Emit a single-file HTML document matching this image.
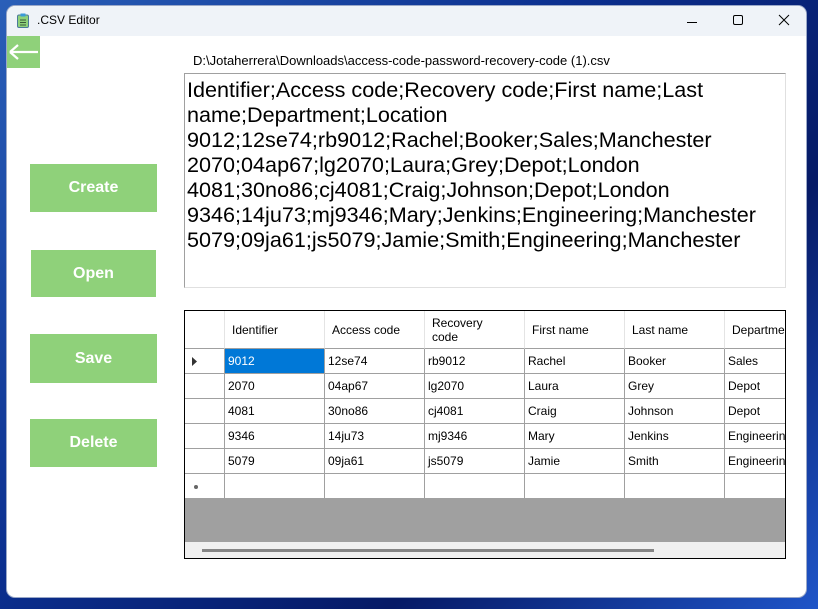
<!DOCTYPE html>
<html><head><meta charset="utf-8"><style>
*{margin:0;padding:0;box-sizing:border-box}
body{width:818px;height:609px;overflow:hidden;position:relative;font-family:"Liberation Sans",sans-serif;
background:linear-gradient(135deg,#2a5fb8 0%,#0b2f8f 40%,#061a66 70%,#1f55c8 100%);}
.win{position:absolute;left:7px;top:6px;width:799px;height:591px;background:#fff;border-radius:8px;overflow:hidden;box-shadow:0 0 0 1px #9aa8c8}
.title{position:absolute;left:0;top:0;width:100%;height:30px;background:#eff3f8}
.title .t{position:absolute;left:30px;top:7px;font-size:12px;color:#000}
.a{position:absolute}
.btn{position:absolute;background:#8fd17a;color:#fff;font-weight:bold;font-size:16px;text-align:center}
.tb{position:absolute;left:177px;top:67px;width:602px;height:215px;border:1px solid #a0a0a0;border-right-color:#e0e0e0;border-bottom-color:#e0e0e0;font-size:21.6px;line-height:25px;padding:3px 0 0 2px;color:#000;white-space:nowrap;overflow:hidden}
.grid{position:absolute;left:177px;top:304px;width:602px;height:249px;border:1px solid #000;background:#a0a0a0;overflow:hidden}
.c{position:absolute;font-size:12px;color:#000;background:#fff;border-right:1px solid #a0a0a0;border-bottom:1px solid #a0a0a0;padding-left:3px;line-height:24px;white-space:nowrap;overflow:hidden}
.h{border-right:1px solid #e4e4e4;border-bottom:1px solid #a0a0a0;padding-left:7px}
</style></head><body>
<div class="win">
<div class="title">
<svg class="a" style="left:10px;top:7px" width="12" height="15" viewBox="0 0 12 15"><rect x="0.5" y="2" width="11" height="12.5" rx="1.5" fill="#8fd17a" stroke="#4a7a9a"/><rect x="3.5" y="0.5" width="5" height="3" fill="#3a9ad8"/><path d="M3 7h6M3 9.5h6M3 12h6" stroke="#3a5a3a"/></svg>
<div class="t">.CSV Editor</div>
<svg class="a" style="left:680px;top:11px" width="10" height="10"><path d="M0 5.5h10" stroke="#000"/></svg>
<svg class="a" style="left:725px;top:8px" width="12" height="12"><rect x="1.5" y="1.5" width="9" height="9" rx="1.5" fill="none" stroke="#000"/></svg>
<svg class="a" style="left:771px;top:8px" width="12" height="12"><path d="M1 1l10 10M11 1L1 11" stroke="#000"/></svg>
</div>
<div class="a" style="left:0;top:30px;width:33px;height:32px;background:#8fd17a"></div>
<svg class="a" style="left:1px;top:36px" width="32" height="20"><path d="M2 10h28M2 10l8-7M2 10l8 7" stroke="#fff" stroke-width="2.2" fill="none"/></svg>
<div class="a" style="left:186px;top:47px;font-size:13px;color:#000">D:\Jotaherrera\Downloads\access-code-password-recovery-code (1).csv</div>
<div class="tb">Identifier;Access code;Recovery code;First name;Last<br>name;Department;Location<br>9012;12se74;rb9012;Rachel;Booker;Sales;Manchester<br>2070;04ap67;lg2070;Laura;Grey;Depot;London<br>4081;30no86;cj4081;Craig;Johnson;Depot;London<br>9346;14ju73;mj9346;Mary;Jenkins;Engineering;Manchester<br>5079;09ja61;js5079;Jamie;Smith;Engineering;Manchester</div>
<div class="btn" style="left:23px;top:158px;width:127px;height:48px;line-height:48px">Create</div>
<div class="btn" style="left:24px;top:244px;width:125px;height:47px;line-height:47px">Open</div>
<div class="btn" style="left:23px;top:328px;width:127px;height:49px;line-height:49px">Save</div>
<div class="btn" style="left:23px;top:413px;width:127px;height:48px;line-height:48px">Delete</div>
<div class="grid">
<div class="c h" style="left:0;top:0;width:40px;height:38px"></div>
<div class="c h" style="left:40px;top:0;width:100px;height:38px;line-height:38px">Identifier</div>
<div class="c h" style="left:140px;top:0;width:100px;height:38px;line-height:38px">Access code</div>
<div class="c h" style="left:240px;top:0;width:100px;height:38px;line-height:14px;padding-top:5px">Recovery<br>code</div>
<div class="c h" style="left:340px;top:0;width:100px;height:38px;line-height:38px">First name</div>
<div class="c h" style="left:440px;top:0;width:100px;height:38px;line-height:38px">Last name</div>
<div class="c h" style="left:540px;top:0;width:100px;height:38px;line-height:38px">Department</div>

<div class="c" style="left:0;top:38px;width:40px;height:25px"><svg style="position:absolute;left:7px;top:8px" width="6" height="9"><path d="M0 0l5 4.5L0 9z" fill="#333"/></svg></div>
<div class="c" style="left:40px;top:38px;width:100px;height:25px;background:#0078d7;color:#fff">9012</div>
<div class="c" style="left:140px;top:38px;width:100px;height:25px">12se74</div>
<div class="c" style="left:240px;top:38px;width:100px;height:25px">rb9012</div>
<div class="c" style="left:340px;top:38px;width:100px;height:25px">Rachel</div>
<div class="c" style="left:440px;top:38px;width:100px;height:25px">Booker</div>
<div class="c" style="left:540px;top:38px;width:100px;height:25px">Sales</div>

<div class="c" style="left:0;top:63px;width:40px;height:25px"></div>
<div class="c" style="left:40px;top:63px;width:100px;height:25px">2070</div>
<div class="c" style="left:140px;top:63px;width:100px;height:25px">04ap67</div>
<div class="c" style="left:240px;top:63px;width:100px;height:25px">lg2070</div>
<div class="c" style="left:340px;top:63px;width:100px;height:25px">Laura</div>
<div class="c" style="left:440px;top:63px;width:100px;height:25px">Grey</div>
<div class="c" style="left:540px;top:63px;width:100px;height:25px">Depot</div>

<div class="c" style="left:0;top:88px;width:40px;height:25px"></div>
<div class="c" style="left:40px;top:88px;width:100px;height:25px">4081</div>
<div class="c" style="left:140px;top:88px;width:100px;height:25px">30no86</div>
<div class="c" style="left:240px;top:88px;width:100px;height:25px">cj4081</div>
<div class="c" style="left:340px;top:88px;width:100px;height:25px">Craig</div>
<div class="c" style="left:440px;top:88px;width:100px;height:25px">Johnson</div>
<div class="c" style="left:540px;top:88px;width:100px;height:25px">Depot</div>

<div class="c" style="left:0;top:113px;width:40px;height:25px"></div>
<div class="c" style="left:40px;top:113px;width:100px;height:25px">9346</div>
<div class="c" style="left:140px;top:113px;width:100px;height:25px">14ju73</div>
<div class="c" style="left:240px;top:113px;width:100px;height:25px">mj9346</div>
<div class="c" style="left:340px;top:113px;width:100px;height:25px">Mary</div>
<div class="c" style="left:440px;top:113px;width:100px;height:25px">Jenkins</div>
<div class="c" style="left:540px;top:113px;width:100px;height:25px">Engineering</div>

<div class="c" style="left:0;top:138px;width:40px;height:25px"></div>
<div class="c" style="left:40px;top:138px;width:100px;height:25px">5079</div>
<div class="c" style="left:140px;top:138px;width:100px;height:25px">09ja61</div>
<div class="c" style="left:240px;top:138px;width:100px;height:25px">js5079</div>
<div class="c" style="left:340px;top:138px;width:100px;height:25px">Jamie</div>
<div class="c" style="left:440px;top:138px;width:100px;height:25px">Smith</div>
<div class="c" style="left:540px;top:138px;width:100px;height:25px">Engineering</div>

<div class="c" style="left:0;top:163px;width:40px;height:25px"><div style="position:absolute;left:9px;top:11px;width:4px;height:4px;border-radius:2px;background:#666"></div></div>
<div class="c" style="left:40px;top:163px;width:100px;height:25px"></div>
<div class="c" style="left:140px;top:163px;width:100px;height:25px"></div>
<div class="c" style="left:240px;top:163px;width:100px;height:25px"></div>
<div class="c" style="left:340px;top:163px;width:100px;height:25px"></div>
<div class="c" style="left:440px;top:163px;width:100px;height:25px"></div>
<div class="c" style="left:540px;top:163px;width:100px;height:25px"></div>

<div class="a" style="left:0;top:231px;width:602px;height:17px;background:#f0f0f0"></div>
<div class="a" style="left:17px;top:238px;width:452px;height:3px;background:#858585"></div>
</div>
</div>
</body></html>
